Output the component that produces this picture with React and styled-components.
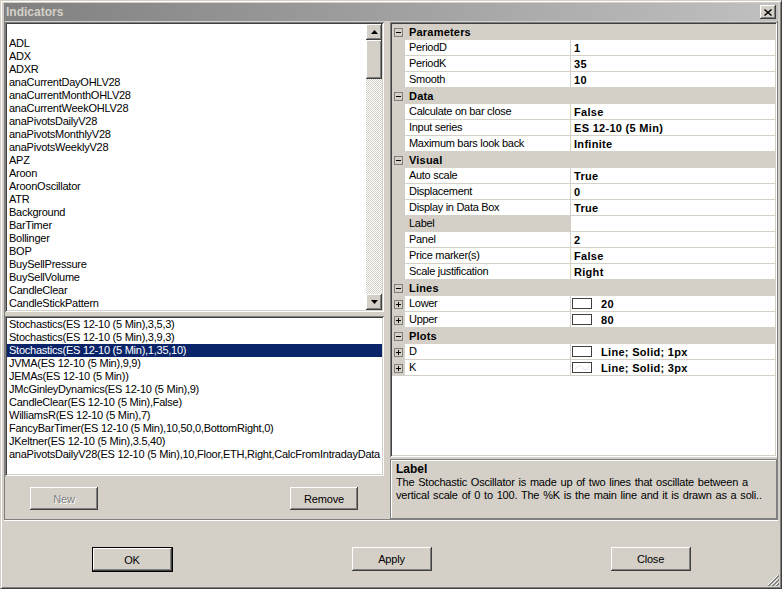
import React from 'react';
import styled, { createGlobalStyle, css } from 'styled-components';

const GlobalStyle = createGlobalStyle`
  html, body { margin: 0; padding: 0; background: #d4d0c8; }
  body {
    font-family: "Liberation Sans", Arial, sans-serif;
    font-size: 11px;
    color: #000;
  }
  * { box-sizing: border-box; }
`;

const raised = css`
  background: #d4d0c8;
  box-shadow: inset -1px -1px #404040, inset 1px 1px #fff, inset -2px -2px #808080, inset 2px 2px #d4d0c8;
`;

const sunken = css`
  box-shadow: inset 1px 1px #808080, inset -1px -1px #fff, inset 2px 2px #404040, inset -2px -2px #d4d0c8;
`;

const indicators = [
  '', 'ADL', 'ADX', 'ADXR', 'anaCurrentDayOHLV28', 'anaCurrentMonthOHLV28', 'anaCurrentWeekOHLV28',
  'anaPivotsDailyV28', 'anaPivotsMonthlyV28', 'anaPivotsWeeklyV28', 'APZ', 'Aroon', 'AroonOscillator',
  'ATR', 'Background', 'BarTimer', 'Bollinger', 'BOP', 'BuySellPressure', 'BuySellVolume',
  'CandleClear', 'CandleStickPattern',
];

const applied = [
  'Stochastics(ES 12-10 (5 Min),3,5,3)',
  'Stochastics(ES 12-10 (5 Min),3,9,3)',
  'Stochastics(ES 12-10 (5 Min),1,35,10)',
  'JVMA(ES 12-10 (5 Min),9,9)',
  'JEMAs(ES 12-10 (5 Min))',
  'JMcGinleyDynamics(ES 12-10 (5 Min),9)',
  'CandleClear(ES 12-10 (5 Min),False)',
  'WilliamsR(ES 12-10 (5 Min),7)',
  'FancyBarTimer(ES 12-10 (5 Min),10,50,0,BottomRight,0)',
  'JKeltner(ES 12-10 (5 Min),3.5,40)',
  'anaPivotsDailyV28(ES 12-10 (5 Min),10,Floor,ETH,Right,CalcFromIntradayData',
];

const sections = [
  { name: 'Parameters', rows: [
    { name: 'PeriodD', value: '1' },
    { name: 'PeriodK', value: '35' },
    { name: 'Smooth', value: '10' },
  ] },
  { name: 'Data', rows: [
    { name: 'Calculate on bar close', value: 'False' },
    { name: 'Input series', value: 'ES 12-10 (5 Min)' },
    { name: 'Maximum bars look back', value: 'Infinite' },
  ] },
  { name: 'Visual', rows: [
    { name: 'Auto scale', value: 'True' },
    { name: 'Displacement', value: '0' },
    { name: 'Display in Data Box', value: 'True' },
    { name: 'Label', value: '', selected: true },
    { name: 'Panel', value: '2' },
    { name: 'Price marker(s)', value: 'False' },
    { name: 'Scale justification', value: 'Right' },
  ] },
  { name: 'Lines', rows: [
    { name: 'Lower', value: '20', swatch: true, expand: true },
    { name: 'Upper', value: '80', swatch: true, expand: true },
  ] },
  { name: 'Plots', rows: [
    { name: 'D', value: 'Line; Solid; 1px', swatch: true, expand: true },
    { name: 'K', value: 'Line; Solid; 3px', swatch: true, wave: true, expand: true },
  ] },
];

const Window = styled.div`
  position: relative;
  width: 782px;
  height: 589px;
  display: flex;
  flex-direction: column;
  background: #d4d0c8;
  border-top: 1px solid #d4d0c8;
  border-left: 1px solid #d4d0c8;
  border-right: 1px solid #404040;
  border-bottom: 1px solid #404040;
  box-shadow: inset 1px 1px #fff, inset -1px -1px #808080;
  padding: 2px 3px 3px 3px;
`;

const TitleBar = styled.div`
  height: 18px;
  display: flex;
  align-items: center;
  justify-content: space-between;
  padding: 0 2px 0 2px;
  background: linear-gradient(to right, #808080, #c0c0c0);
`;

const Title = styled.span`
  font-weight: bold;
  font-size: 12px;
  color: #d4d0c8;
`;

const CloseBox = styled.span`
  ${raised};
  width: 16px;
  height: 14px;
  display: flex;
  align-items: center;
  justify-content: center;
`;

const Content = styled.div`
  height: 499px;
  display: grid;
  grid-template-columns: 379px 387px;
  column-gap: 6px;
  padding-top: 1px;
  border-left: 1px solid #808080;
  border-right: 1px solid #808080;
  border-bottom: 1px solid #808080;
  box-shadow: 0 1px 0 #fff;
`;

const Column = styled.div`
  display: flex;
  flex-direction: column;
  gap: ${p => p.$gap}px;
  min-height: 0;
`;

const ListBox = styled.div`
  ${sunken};
  background: #fff;
  padding: 2px;
  height: ${p => p.$height}px;
  display: flex;
  overflow: hidden;
  flex-shrink: 0;
`;

const Items = styled.div`
  flex: 1;
  min-width: 0;
  overflow: hidden;
`;

const Item = styled.div`
  height: 13px;
  line-height: 13px;
  padding-left: 2px;
  white-space: nowrap;
  overflow: hidden;
  letter-spacing: -0.25px;
  background: ${p => (p.$selected ? '#0a246a' : 'transparent')};
  color: ${p => (p.$selected ? '#fff' : '#000')};
`;

const ScrollBar = styled.div`
  width: 16px;
  display: flex;
  flex-direction: column;
`;

const ScrollButton = styled.div`
  ${raised};
  width: 16px;
  height: ${p => p.$h || 16}px;
  display: flex;
  align-items: center;
  justify-content: center;
  flex-shrink: 0;
`;

const Track = styled.div`
  flex: 1;
  background: repeating-conic-gradient(#d4d0c8 0 25%, #fff 0 50%) 0 0 / 2px 2px;
`;

const Group = styled.div`
  flex: 1;
  display: flex;
  flex-direction: column;
`;

const GroupButtons = styled.div`
  flex: 1;
  display: flex;
  align-items: center;
  justify-content: space-between;
  padding: 2px 26px 0 25px;
`;

const Button = styled.button`
  ${raised};
  border: none;
  margin: 0;
  padding: 0;
  width: ${p => p.$w}px;
  height: ${p => p.$h}px;
  font-family: "Liberation Sans", Arial, sans-serif;
  font-size: 11px;
  letter-spacing: -0.2px;
  color: ${p => (p.disabled ? '#808080' : '#000')};
  text-shadow: ${p => (p.disabled ? '1px 1px 0 #fff' : 'none')};
  ${p => p.$default && css`
    box-shadow: inset 0 0 0 1px #000, inset -2px -2px #404040, inset 2px 2px #fff,
      inset -3px -3px #808080, inset 3px 3px #d4d0c8;
  `}
`;

const Grid = styled.div`
  ${sunken};
  background: #fff;
  height: 435px;
  padding: 2px;
  flex-shrink: 0;
`;

const Row = styled.div`
  display: grid;
  grid-template-columns: 13px 166px 1fr;
  height: 16px;
`;

const Margin = styled.div`
  background: #d4d0c8;
  display: flex;
  align-items: center;
  padding-left: 2px;
`;

const CategoryName = styled.div`
  grid-column: 2 / 4;
  background: #d4d0c8;
  font-weight: bold;
  line-height: 16px;
  padding-left: 4px;
  letter-spacing: 0.2px;
`;

const NameCell = styled.div`
  background: ${p => (p.$selected ? '#d4d0c8' : '#fff')};
  border-bottom: 1px solid #d4d0c8;
  border-right: 1px solid #d4d0c8;
  line-height: 15px;
  padding-left: 4px;
  white-space: nowrap;
  overflow: hidden;
  letter-spacing: -0.3px;
`;

const ValueCell = styled.div`
  border-bottom: 1px solid #d4d0c8;
  display: flex;
  align-items: center;
  padding-left: ${p => (p.$swatch ? 1 : 3)}px;
  font-weight: bold;
  letter-spacing: 0.3px;
  white-space: nowrap;
`;

const Swatch = styled.span`
  width: 20px;
  height: 11px;
  border: 1px solid #404040;
  background: #fff;
  margin-right: 9px;
  display: flex;
  align-items: center;
  justify-content: center;
`;

const Description = styled.div`
  flex: 1;
  border: 1px solid #808080;
  box-shadow: inset 1px 1px #fff;
  padding: 3px 5px;
  line-height: 13px;
`;

const DescTitle = styled.div`
  font-weight: bold;
  font-size: 12px;
`;

const DescText = styled.div`
  letter-spacing: -0.2px;
  word-spacing: 1px;
  white-space: nowrap;
`;

const BottomBar = styled.div`
  flex: 1;
  display: flex;
  justify-content: center;
  align-items: flex-start;
  gap: 179px;
  padding-top: 27px;
`;

const Grip = styled.svg`
  position: absolute;
  right: 2px;
  bottom: 2px;
`;

const Arrow = ({ down }) => (
  <svg width="7" height="4" viewBox="0 0 7 4">
    <polygon points={down ? '0,0 7,0 3.5,4' : '3.5,0 7,4 0,4'} fill="#000" />
  </svg>
);

const Expander = ({ open }) => (
  <svg width="9" height="9" viewBox="0 0 9 9">
    <rect x="0.5" y="0.5" width="8" height="8" fill="none" stroke="#808080" />
    <path d="M2 4.5h5" stroke="#000" />
    {!open && <path d="M4.5 2v5" stroke="#000" />}
  </svg>
);

function PropertyGrid() {
  return (
    <Grid>
      {sections.map(s => (
        <React.Fragment key={s.name}>
          <Row>
            <Margin><Expander open /></Margin>
            <CategoryName>{s.name}</CategoryName>
          </Row>
          {s.rows.map(r => (
            <Row key={r.name}>
              <Margin>{r.expand && <Expander />}</Margin>
              <NameCell $selected={r.selected}>{r.name}</NameCell>
              <ValueCell $swatch={r.swatch}>
                {r.swatch && (
                  <Swatch>
                    {r.wave && (
                      <svg width="16" height="7" viewBox="0 0 16 7">
                        <path d="M1 5 C4 1 7 1 9 4 S13 6 15 2" fill="none" stroke="#e4e4e4" />
                      </svg>
                    )}
                  </Swatch>
                )}
                {r.value}
              </ValueCell>
            </Row>
          ))}
        </React.Fragment>
      ))}
    </Grid>
  );
}

export default function App() {
  return (
    <Window>
      <GlobalStyle />
      <TitleBar>
        <Title>Indicators</Title>
        <CloseBox>
          <svg width="8" height="7" viewBox="0 0 8 7">
            <path d="M0.5 0.5 L7.5 6.5 M7.5 0.5 L0.5 6.5" stroke="#000" strokeWidth="1.4" />
          </svg>
        </CloseBox>
      </TitleBar>
      <Content>
        <Column $gap={4}>
          <ListBox $height={290}>
            <Items>
              {indicators.map((n, i) => <Item key={i}>{n || '\u00a0'}</Item>)}
            </Items>
            <ScrollBar>
              <ScrollButton><Arrow /></ScrollButton>
              <ScrollButton $h={39} />
              <Track />
              <ScrollButton><Arrow down /></ScrollButton>
            </ScrollBar>
          </ListBox>
          <Group>
            <ListBox $height={160}>
              <Items>
                {applied.map((n, i) => <Item key={i} $selected={i === 2}>{n}</Item>)}
              </Items>
            </ListBox>
            <GroupButtons>
              <Button $w={68} $h={23} disabled>New</Button>
              <Button $w={68} $h={23}>Remove</Button>
            </GroupButtons>
          </Group>
        </Column>
        <Column $gap={2}>
          <PropertyGrid />
          <Description>
            <DescTitle>Label</DescTitle>
            <DescText>The Stochastic Oscillator is made up of two lines that oscillate between a</DescText>
            <DescText>vertical scale of 0 to 100. The %K is the main line and it is drawn as a soli..</DescText>
          </Description>
        </Column>
      </Content>
      <BottomBar>
        <Button $w={81} $h={25} $default>OK</Button>
        <Button $w={80} $h={24}>Apply</Button>
        <Button $w={80} $h={24}>Close</Button>
      </BottomBar>
      <Grip width="12" height="12" viewBox="0 0 12 12">
        <path d="M11 1 L1 11 M11 5 L5 11 M11 9 L9 11" stroke="#fff" />
        <path d="M12 1 L1 12 M12 2 L2 12 M12 5 L5 12 M12 6 L6 12 M12 9 L9 12 M12 10 L10 12" stroke="#808080" />
      </Grip>
    </Window>
  );
}
